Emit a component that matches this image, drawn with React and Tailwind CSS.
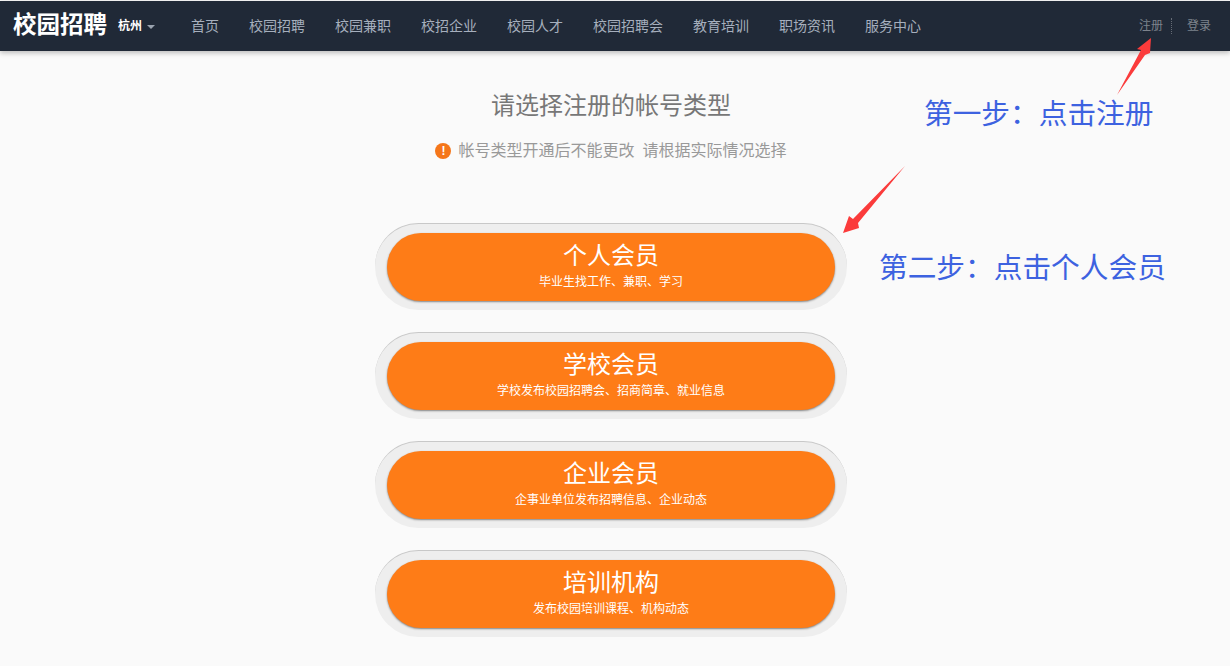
const navItems = ['首页', '校园招聘', '校园兼职', '校招企业', '校园人才', '校园招聘会', '教育培训', '职场资讯', '服务中心'];

const memberTypes = [
  { title: '个人会员', desc: '毕业生找工作、兼职、学习' },
  { title: '学校会员', desc: '学校发布校园招聘会、招商简章、就业信息' },
  { title: '企业会员', desc: '企事业单位发布招聘信息、企业动态' },
  { title: '培训机构', desc: '发布校园培训课程、机构动态' },
];

const sans = 'font-["Liberation_Sans","Noto_Sans_CJK_SC",sans-serif]';

function MemberButton({ title, desc }) {
  return (
    <a className="block w-[472px] h-[87px] pt-[9px] px-3 rounded-[44px] bg-[#eeeeee] border-t border-[#c8c8c8]">
      <div className="h-[68px] rounded-[34px] bg-[#fe7c17] shadow-[0_1px_2px_rgba(0,0,0,0.45)] flex flex-col items-center text-white">
        <div className="mt-[7px] text-[24px] leading-[32px]">{title}</div>
        <div className="text-[12px] leading-[18px] mt-[1px]">{desc}</div>
      </div>
    </a>
  );
}

export default function App() {
  return (
    <div className={`relative h-[666px] overflow-hidden bg-[#fafafa] pt-px ${sans}`}>
      <header className="h-[50px] bg-[#202937] shadow-[0_2px_5px_rgba(0,0,0,0.25)] flex items-center pl-[13px] pr-[19px]">
        <span className="text-[23.5px] font-bold text-white w-[105px] whitespace-nowrap">校园招聘</span>
        <span className="text-[12px] font-bold text-white">杭州</span>
        <span className="ml-[5px] mt-px w-0 h-0 border-x-4 border-x-transparent border-t-4 border-t-[#9aa3af]"></span>
        <nav className="flex gap-[30px] ml-[36px] text-[14px] text-[#a6afbd] whitespace-nowrap">
          {navItems.map((item) => (
            <a key={item}>{item}</a>
          ))}
        </nav>
        <div className="ml-auto flex items-center text-[12px] text-[#7d838c]">
          <a>注册</a>
          <span className="mx-2 h-4 border-l border-dotted border-[#666c76]"></span>
          <a className="ml-[7px]">登录</a>
        </div>
      </header>

      <main className="flex flex-col items-center pr-2">
        <h1 className="mt-[40px] text-[24px] leading-[30px] text-[#777777] font-normal">请选择注册的帐号类型</h1>
        <p className="mt-[18px] flex items-center text-[16px] leading-[24px] text-[#999999]">
          <span className="w-4 h-4 mr-[7px] rounded-full bg-[#f5761a] text-white text-[12px] leading-4 font-bold text-center">!</span>
          <span className="mr-[8px]">帐号类型开通后不能更改</span>
          <span>请根据实际情况选择</span>
        </p>
        <div className="mt-[60px] flex flex-col gap-[22px]">
          {memberTypes.map((m) => (
            <MemberButton key={m.title} {...m} />
          ))}
        </div>
      </main>

      {/* 标注 */}
      <div className="absolute left-[924px] top-[96px] text-[28.7px] leading-[36px] text-[#3d62e0] whitespace-nowrap">第一步：点击注册</div>
      <div className="absolute left-[879px] top-[250px] text-[28.7px] leading-[36px] text-[#3d62e0] whitespace-nowrap">第二步：点击个人会员</div>
      <svg className="absolute left-0 top-0 pointer-events-none" width="1230" height="666">
        <polygon points="1117,95 1141,50 1137,49 1151,38 1150,53 1145,55" fill="#fb3b3b" />
        <polygon points="905,166 858,223 859,228 843,233 849,216 853,219" fill="#fb3b3b" />
      </svg>
    </div>
  );
}
